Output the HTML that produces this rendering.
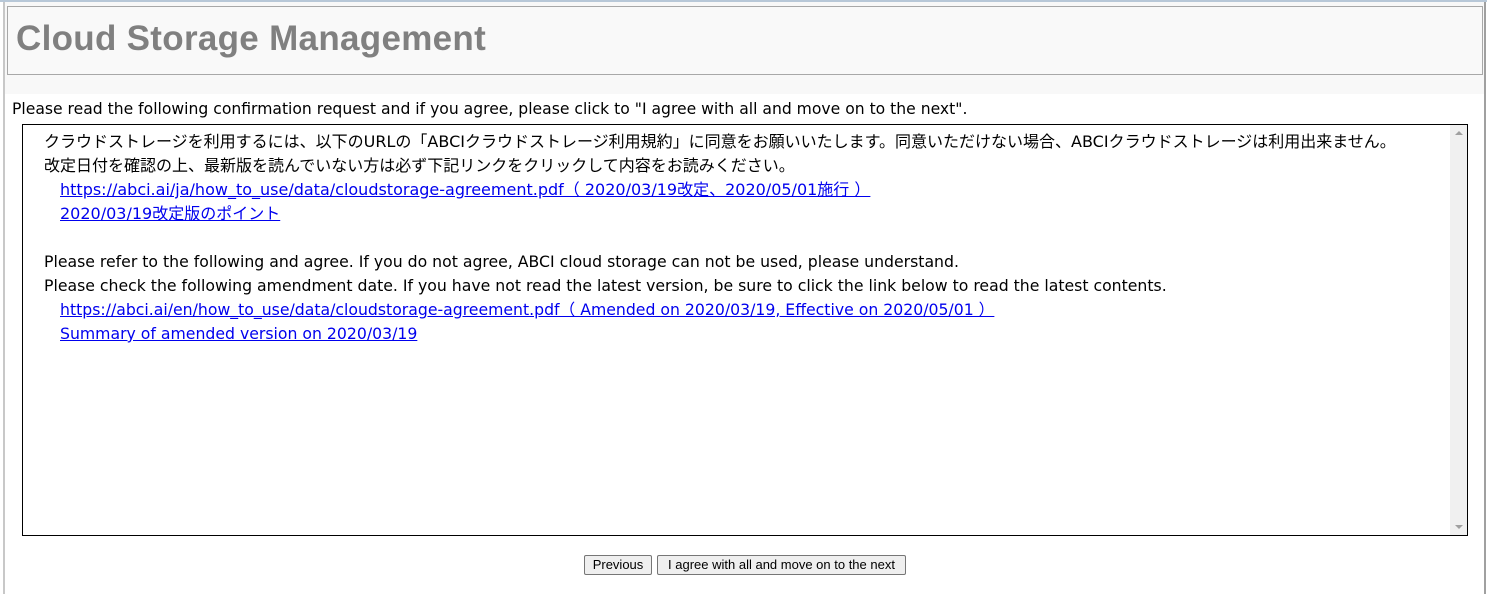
<!DOCTYPE html>
<html><head><meta charset="utf-8"><style>
html,body{margin:0;padding:0;background:#fff;width:1487px;height:594px;overflow:hidden;position:relative;font-family:"DejaVu Sans","Noto Sans CJK JP",sans-serif;color:#000}
.topline{position:absolute;left:0;top:0;width:1487px;height:2px;background:#b8c8d8}
.lb{position:absolute;left:3px;top:2px;width:2px;height:592px;background:#c8c8c8}
.rb{position:absolute;left:1484px;top:2px;width:2px;height:592px;background:#a0a0a0}
.hdrbg{position:absolute;left:5px;top:2px;width:1479px;height:92px;background:#f8f8f8}
.hdr{position:absolute;left:7px;top:6px;width:1474px;height:67px;border:1px solid #a8a8a8;background:#f9f9f9}
.hdr h1{margin:0;position:absolute;left:8px;top:12px;font:bold 35px "Liberation Sans","DejaVu Sans",sans-serif;color:#808080;letter-spacing:0.3px}
.req{position:absolute;left:12px;top:100px;font-size:15.6px;white-space:nowrap}
.box{position:absolute;left:22px;top:124px;width:1444px;height:410px;border:1px solid #000;background:#fff}
.sb{position:absolute;right:0;top:0;width:17px;height:410px;background:#f0f0f0}
.sb .u{position:absolute;left:5px;top:6px;width:0;height:0;border-left:4px solid transparent;border-right:4px solid transparent;border-bottom:4px solid #a0a0a0}
.sb .d{position:absolute;left:5px;bottom:6px;width:0;height:0;border-left:4px solid transparent;border-right:4px solid transparent;border-top:4px solid #a0a0a0}
.ln{position:absolute;left:21px;font-size:15.7px;white-space:nowrap;line-height:20px}
.jp{font-size:16px}
.ln a{color:#0000ee;text-decoration:underline}
.in{left:37px}
.btn{position:absolute;top:555px;height:18px;border:1px solid #767676;border-radius:2px;background:#efefef;font:13px "Liberation Sans",sans-serif;line-height:18px;text-align:center;color:#000}
</style></head><body>
<div class="topline"></div>
<div class="hdrbg"></div>
<div class="lb"></div><div class="rb"></div>
<div class="hdr"><h1>Cloud Storage Management</h1></div>
<div class="req">Please read the following confirmation request and if you agree, please click to "I agree with all and move on to the next".</div>
<div class="box">
<div class="ln jp" style="top:7px">クラウドストレージを利用するには、以下のURLの「ABCIクラウドストレージ利用規約」に同意をお願いいたします。同意いただけない場合、ABCIクラウドストレージは利用出来ません。</div>
<div class="ln jp" style="top:31px">改定日付を確認の上、最新版を読んでいない方は必ず下記リンクをクリックして内容をお読みください。</div>
<div class="ln jp in" style="top:55px"><a>https://abci.ai/ja/how_to_use/data/cloudstorage-agreement.pdf（ 2020/03/19改定、2020/05/01施行 ）</a></div>
<div class="ln jp in" style="top:79px"><a>2020/03/19改定版のポイント</a></div>
<div class="ln" style="top:127px">Please refer to the following and agree. If you do not agree, ABCI cloud storage can not be used, please understand.</div>
<div class="ln" style="top:151px">Please check the following amendment date. If you have not read the latest version, be sure to click the link below to read the latest contents.</div>
<div class="ln in" style="top:175px"><a>https://abci.ai/en/how_to_use/data/cloudstorage-agreement.pdf（ Amended on 2020/03/19, Effective on 2020/05/01 ）</a></div>
<div class="ln in" style="top:199px"><a>Summary of amended version on 2020/03/19</a></div>
<div class="sb"><div class="u"></div><div class="d"></div></div>
</div>
<div class="btn" style="left:584px;width:66px">Previous</div>
<div class="btn" style="left:657px;width:247px">I agree with all and move on to the next</div>
</body></html>
